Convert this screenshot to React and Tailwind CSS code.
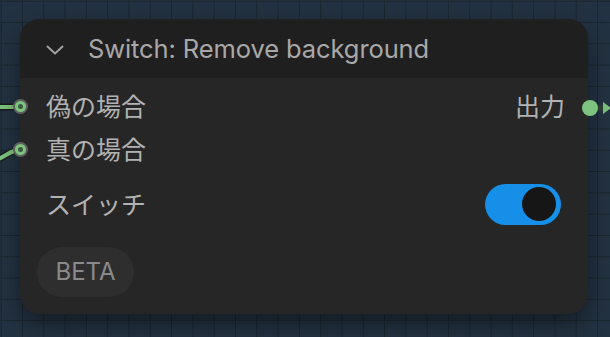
import React from "react";

const jp = { fontFamily: '"Noto Sans CJK JP", "Noto Sans", sans-serif' };

function Handle({ className }) {
  return (
    <div className={`absolute w-[15px] h-[15px] rounded-full bg-[#7cc47f] border-2 border-[#5e5e5e] flex items-center justify-center ${className}`}>
      <div className="w-[5px] h-[5px] rounded-full bg-[#3d5a40]" />
    </div>
  );
}

export default function App() {
  return (
    <div
      className="relative w-[610px] h-[337px] overflow-hidden bg-[#233242] bg-[linear-gradient(to_right,#1a2630_1px,transparent_1px),linear-gradient(to_bottom,#1a2630_1px,transparent_1px)] bg-size-[21.3px_21.3px] bg-position-[0.7px_0.7px] pt-[19px] pl-[20px]"
      style={{ fontFamily: 'Inter, "Noto Sans CJK JP", sans-serif' }}
    >
      <svg className="absolute left-0 top-0" width="610" height="337">
        <path d="M-2 107 L14 107" stroke="#1a1f1a" strokeWidth="7" fill="none" />
        <path d="M-2 107 L14 107" stroke="#7cc47f" strokeWidth="4" fill="none" />
        <path d="M-2 159 C4 157 8 153 14 151" stroke="#1a1f1a" strokeWidth="7" fill="none" />
        <path d="M-2 159 C4 157 8 153 14 151" stroke="#7cc47f" strokeWidth="4" fill="none" />
        <path d="M596 108 L606 108" stroke="#2c4430" strokeWidth="5" fill="none" />
        <path d="M603 102 L611 108 L603 114 Z" fill="#7cc47f" />
      </svg>

      <div className="relative w-[568px] h-[295px] rounded-[20px] bg-[#262627] shadow-[0_10px_24px_rgba(0,0,0,0.45)] flex flex-col">
        <div className="h-[59px] rounded-t-[20px] bg-[#1f1f1f] flex items-center pl-[26px]">
          <svg width="18" height="12" viewBox="0 0 18 12" className="mt-[2px]">
            <path d="M1.5 2.5 L9 9.5 L16.5 2.5" stroke="#a0a0a0" strokeWidth="2" fill="none" strokeLinecap="round" strokeLinejoin="round" />
          </svg>
          <span className="ml-[24px] text-[25.5px] leading-none text-[#a8a8a8] tracking-[-0.1px]">Switch: Remove background</span>
        </div>

        <div className="flex flex-col pl-[26px] pr-[23px] pt-[12px]">
          <div className="h-[32px] flex items-center justify-between text-[25px] text-[#b2b2b2]" style={jp}>
            <span>偽の場合</span>
            <span>出力</span>
          </div>
          <div className="mt-[11px] h-[32px] flex items-center text-[25px] text-[#b2b2b2]" style={jp}>
            <span>真の場合</span>
          </div>
          <div className="mt-[18px] h-[42px] flex items-center justify-between pr-[4px]">
            <span className="text-[25px] text-[#b2b2b2]" style={jp}>スイッチ</span>
            <div className="w-[76px] h-[41px] rounded-full bg-[#168fe8] flex items-center justify-end pr-[5px]">
              <div className="w-[34px] h-[34px] rounded-full bg-[#161616]" />
            </div>
          </div>
          <div className="mt-[22px] -ml-[9px] w-[97px] h-[50px] rounded-full bg-[#2e2e2f] flex items-center justify-center text-[24px] text-[#8a8a8a]">
            BETA
          </div>
        </div>

        <Handle className="left-[-7px] top-[80px]" />
        <Handle className="left-[-7px] top-[123px]" />
        <div className="absolute left-[562px] top-[81px] w-[16px] h-[16px] rounded-full bg-[#7cc47f]" />
      </div>
    </div>
  );
}
